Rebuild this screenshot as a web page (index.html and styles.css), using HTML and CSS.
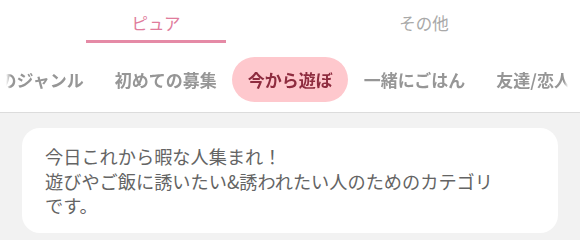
FILE: index.html
```html
<!DOCTYPE html>
<html lang="ja">
<head>
<meta charset="utf-8">
<link rel="stylesheet" href="styles.css">
</head>
<body>
<div class="header">
  <div class="tabs">
    <div class="tab active">ピュア</div>
    <div class="tab">その他</div>
  </div>
</div>
<div class="pill-wrap">
  <div class="pills" id="pills">
    <div class="pill">趣味のジャンル</div>
    <div class="pill">初めての募集</div>
    <div class="pill selected">今から遊ぼ</div>
    <div class="pill">一緒にごはん</div>
    <div class="pill">友達/恋人募集</div>
    <div class="pill">その他</div>
  </div>
</div>
<div class="content">
  <div class="card">今日これから暇な人集まれ！<br>遊びやご飯に誘いたい&amp;誘われたい人のためのカテゴリ<br>です。</div>
</div>
<script src="script.js"></script>
</body>
</html>
```
FILE: styles.css
```css
html, body {
  margin: 0;
  padding: 0;
  background: #f2f2f2;
  font-family: "Noto Sans CJK JP", "Noto Sans", sans-serif;
}
.header {
  background: #fff;
  padding: 0 22px;
}
.tabs {
  display: grid;
  grid-template-columns: 1fr 1fr;
}
.tab {
  height: 43px;
  box-sizing: border-box;
  padding-top: 12px;
  font-size: 16.5px;
  line-height: 22px;
  text-align: center;
  color: #a9a9a9;
  display: flex;
  flex-direction: column;
  align-items: center;
}
.tab.active {
  color: #e07c9c;
}
.tab.active::after {
  content: "";
  margin-top: auto;
  width: 140px;
  height: 3px;
  background: #e58aa6;
}
.pill-wrap {
  background: #fff;
  padding: 14px 0 10px;
  border-bottom: 1px solid #dcdcdc;
}
.pills {
  display: flex;
  overflow-x: auto;
  scrollbar-width: none;
  -webkit-mask-image: linear-gradient(to right, transparent 0, transparent 6px, #000 11px, #000 calc(100% - 16px), transparent calc(100% - 12px));
  mask-image: linear-gradient(to right, transparent 0, transparent 6px, #000 11px, #000 calc(100% - 16px), transparent calc(100% - 12px));
}
.pills::-webkit-scrollbar { display: none; }
.pill {
  flex: none;
  height: 45px;
  line-height: 45px;
  padding: 0 15.5px;
  border-radius: 23px;
  font-size: 17px;
  font-weight: 700;
  color: #969696;
  white-space: nowrap;
}
.pill.selected {
  background: #fec8cd;
  color: #8e2c3f;
}
.content {
  padding: 15px 22px 20px;
}
.card {
  background: #fff;
  border-radius: 18px;
  padding: 16px 30px 15px 23px;
  font-size: 18.2px;
  line-height: 24.5px;
  color: #646464;
  white-space: nowrap;
}
```
FILE: script.js
```js
document.getElementById('pills').scrollLeft = 50;
```
